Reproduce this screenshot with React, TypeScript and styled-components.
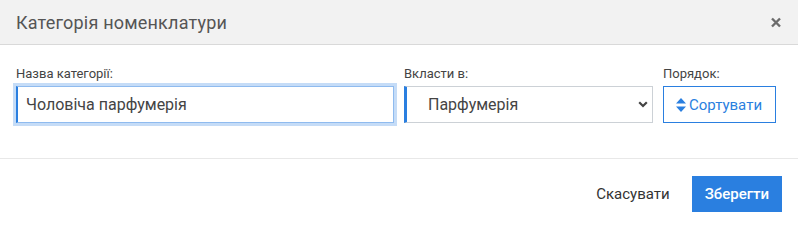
import React from "react";
import styled, { createGlobalStyle } from "styled-components";

const GlobalStyle = createGlobalStyle`
  html, body {
    margin: 0;
    padding: 0;
    background: #ffffff;
    font-family: Roboto, "Liberation Sans", Arial, sans-serif;
  }
  * {
    box-sizing: border-box;
  }
`;

const PRIMARY = "#2a7fe0";

const Dialog = styled.div`
  width: 798px;
  height: 228px;
  background: #fff;
  display: flex;
  flex-direction: column;
`;

const Header = styled.div`
  height: 45px;
  background: #f2f2f2;
  border-bottom: 1px solid #d9d9d9;
  display: flex;
  align-items: center;
  justify-content: space-between;
  padding: 0 17px 0 16px;
`;

const Title = styled.h4`
  margin: 0;
  font-size: 18px;
  font-weight: 400;
  color: #555;
  letter-spacing: 0.2px;
`;

const CloseButton = styled.button`
  border: 0;
  background: none;
  padding: 0;
  width: 10px;
  height: 11px;
  display: flex;
  cursor: pointer;
  margin-top: 1px;
`;

const Body = styled.div`
  padding: 21px 16px 35px;
  border-bottom: 1px solid #e8e8e8;
`;

const FormRow = styled.div`
  display: grid;
  grid-template-columns: 378px 249px 1fr;
  column-gap: 10px;
`;

const Field = styled.div`
  display: flex;
  flex-direction: column;
  align-items: flex-start;
`;

const Label = styled.label`
  font-size: 13px;
  line-height: 16px;
  color: #444;
  margin-bottom: 4px;
`;

const TextInput = styled.input`
  width: 100%;
  height: 37px;
  border: 1px solid #8fbbef;
  border-left: 2px solid ${PRIMARY};
  box-shadow: 0 0 0 3px #c5dcf7;
  padding: 0 8px;
  font-family: inherit;
  font-size: 16px;
  color: #444;
  outline: none;
`;

const SelectWrap = styled.div`
  position: relative;
  width: 100%;
`;

const Select = styled.select`
  width: 100%;
  height: 37px;
  appearance: none;
  background: #fff;
  border: 1px solid #ccd1d6;
  border-left: 3px solid ${PRIMARY};
  padding: 0 30px 0 21px;
  font-family: inherit;
  font-size: 16px;
  color: #444;
  outline: none;
`;

const Chevron = styled.svg`
  position: absolute;
  right: 5px;
  top: 15px;
  pointer-events: none;
`;

const OutlineButton = styled.button`
  height: 37px;
  padding: 0 13px 0 12px;
  background: #fff;
  border: 1px solid ${PRIMARY};
  color: ${PRIMARY};
  font-family: inherit;
  font-size: 15px;
  display: flex;
  align-items: center;
  gap: 3px;
  cursor: pointer;
`;

const Footer = styled.div`
  flex: 1;
  display: flex;
  align-items: center;
  justify-content: flex-end;
  padding: 0 16px;
  gap: 8px;
`;

const FooterButton = styled.button<{ primary?: boolean }>`
  height: 36px;
  padding: ${(p) => (p.primary ? "0 13px" : "0 14px")};
  border: 0;
  font-family: inherit;
  font-size: 15px;
  cursor: pointer;
  background: ${(p) => (p.primary ? PRIMARY : "transparent")};
  color: ${(p) => (p.primary ? "#fff" : "#333")};
  font-weight: ${(p) => (p.primary ? 500 : 400)};
`;

const SortIcon = () => (
  <svg width="10" height="14" viewBox="0 0 10 14">
    <path d="M5 0 L10 5.5 H0 Z M0 8.5 H10 L5 14 Z" fill={PRIMARY} />
  </svg>
);

const App = () => {
  return (
    <>
      <GlobalStyle />
      <Dialog>
        <Header>
          <Title>Категорія номенклатури</Title>
          <CloseButton aria-label="Закрити">
            <svg width="10" height="11" viewBox="0 0 10 11">
              <path
                d="M1 1.5 L9 9.5 M9 1.5 L1 9.5"
                stroke="#6b6b6b"
                strokeWidth="2.4"
              />
            </svg>
          </CloseButton>
        </Header>
        <Body>
          <FormRow>
            <Field>
              <Label>Назва категорії:</Label>
              <TextInput defaultValue="Чоловіча парфумерія" />
            </Field>
            <Field>
              <Label>Вкласти в:</Label>
              <SelectWrap>
                <Select defaultValue="perfume">
                  <option value="perfume">Парфумерія</option>
                </Select>
                <Chevron width="10" height="7" viewBox="0 0 10 7">
                  <path
                    d="M1.2 1.2 L5 5 L8.8 1.2"
                    fill="none"
                    stroke="#444"
                    strokeWidth="2.2"
                  />
                </Chevron>
              </SelectWrap>
            </Field>
            <Field>
              <Label>Порядок:</Label>
              <OutlineButton>
                <SortIcon />
                Сортувати
              </OutlineButton>
            </Field>
          </FormRow>
        </Body>
        <Footer>
          <FooterButton>Скасувати</FooterButton>
          <FooterButton primary>Зберегти</FooterButton>
        </Footer>
      </Dialog>
    </>
  );
};

export default App;
